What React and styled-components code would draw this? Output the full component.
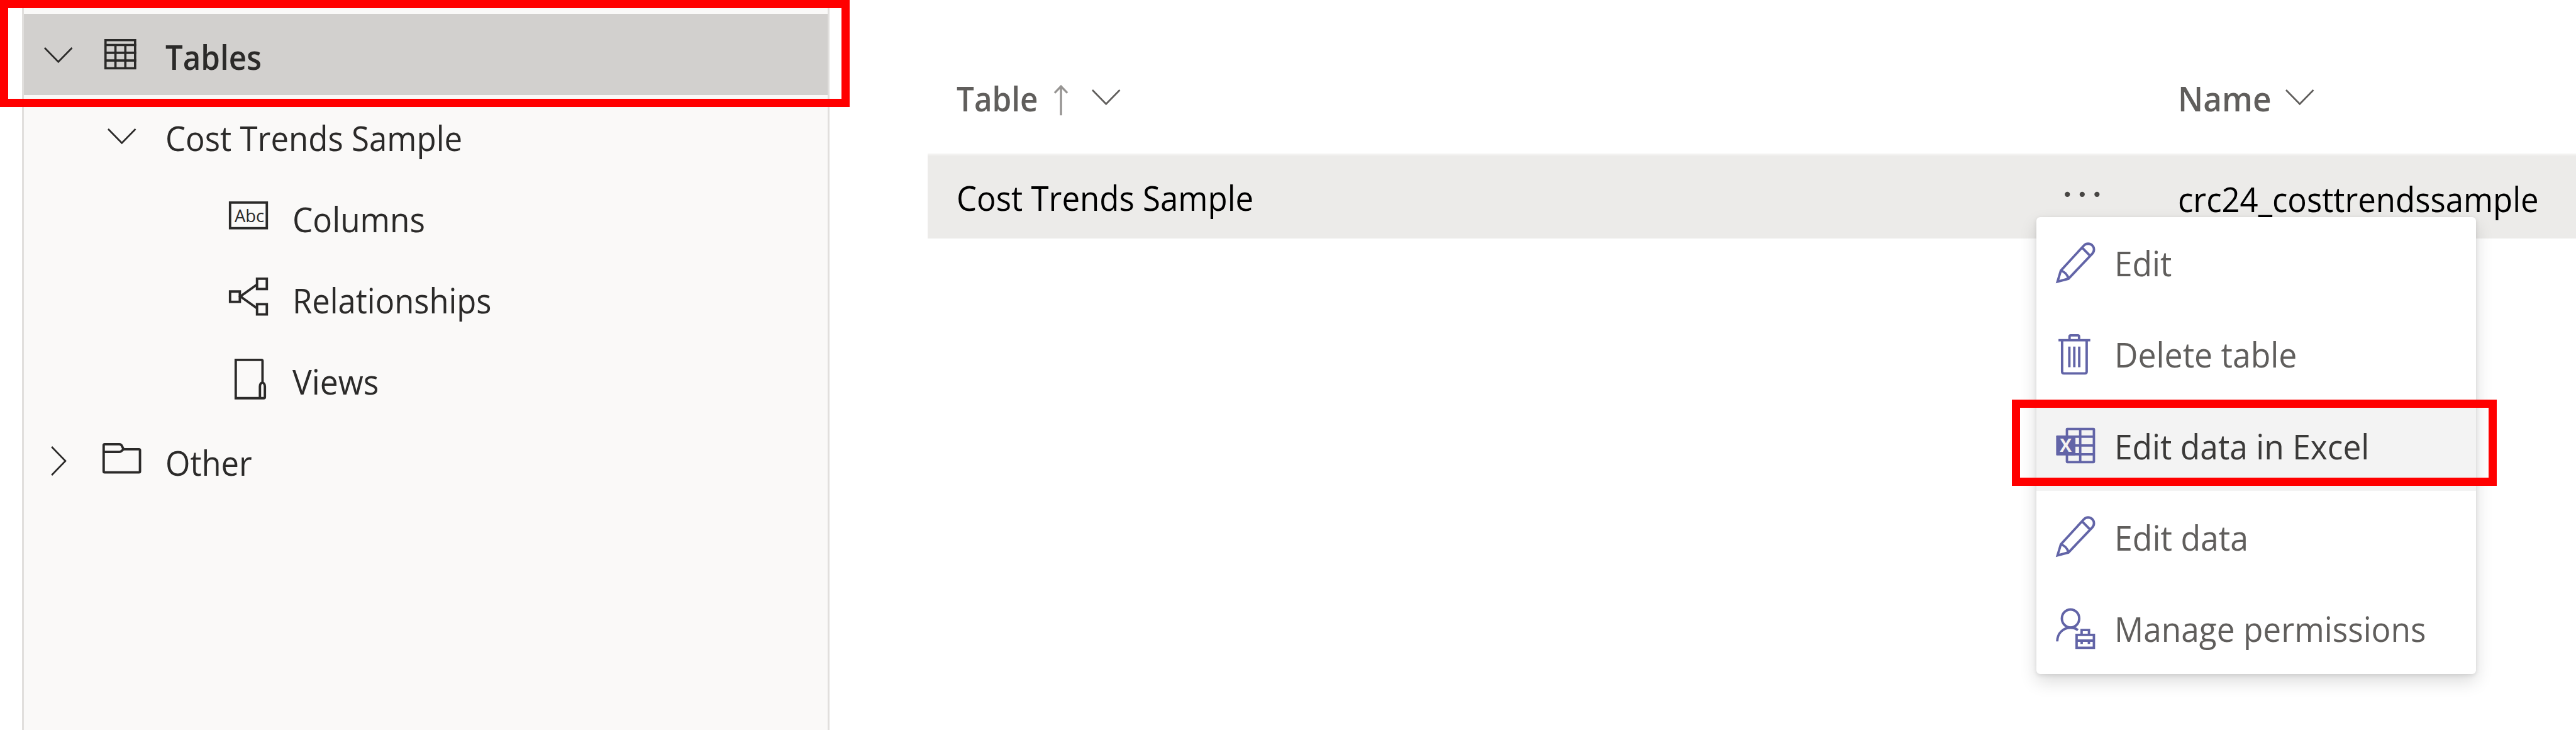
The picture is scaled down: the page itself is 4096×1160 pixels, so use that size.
import React from 'react';
import styled, { createGlobalStyle } from 'styled-components';

const GlobalStyle = createGlobalStyle`
  *, *::before, *::after { box-sizing: border-box; }
  body {
    margin: 0;
    background: #fff;
    font-family: "Open Sans", "Noto Sans", sans-serif;
    overflow: hidden;
  }
`;

const ink = '#2b2a29';
const muted = '#605e5c';
const accent = '#6264a7';

/* Icons are drawn on a slightly larger grid than they are shown at. */
const ICON_SCALE = 0.9597;

const Page = styled.div`
  position: relative;
  display: flex;
  width: 4096px;
  height: 1160px;
  background: #fff;
  overflow: hidden;
`;

const Text = styled.span`
  display: inline-block;
  font-size: 55px;
  line-height: 75px;
  font-weight: ${(p) => (p.$strong ? 600 : 400)};
  white-space: nowrap;
  transform: scaleX(${(p) => p.$fit || 0.93});
  transform-origin: left center;
`;

/* ---------- icons ---------- */

const Svg = styled.svg`
  display: block;
  flex: none;
  overflow: visible;
  fill: none;
  stroke: currentColor;
  stroke-width: ${(p) => p.$line || 4};
  margin-top: ${(p) => (p.$shift || 0) * 2}px;
`;

function Icon({ w, h, line, shift, children }) {
  return (
    <Svg
      width={w * ICON_SCALE}
      height={h * ICON_SCALE}
      viewBox={`0 0 ${w} ${h}`}
      $line={line}
      $shift={shift}
    >
      {children}
    </Svg>
  );
}

const ChevronDown = ({ shift }) => (
  <Icon w={47.4} h={26} line={2.8} shift={shift}>
    <path d="M1 1L23.7 24.2L46.4 1" />
  </Icon>
);

const ChevronRight = () => (
  <Icon w={25} h={49} line={2.8} shift={0.8}>
    <path d="M1.2 1L24 24.5L1.2 48" />
  </Icon>
);

const ArrowUp = ({ shift }) => (
  <Icon w={23} h={50.3} line={3.6} shift={shift}>
    <path d="M11.5 50.3V2M1 13.2L11.5 2.4L22 13.2" />
  </Icon>
);

const TableIcon = () => (
  <Icon w={57.3} h={50.3} line={3.8}>
    <path d="M1.8 1.8H50.9V48.5H1.8Z" />
    <path d="M0 9.9H52.7M0 22.8H52.7M0 35.5H52.7M18.3 9.9V50M34.7 9.9V50" />
  </Icon>
);

const TextBoxIcon = () => (
  <Icon w={64.7} h={46.3} line={4} shift={-1.9}>
    <path d="M1.9 1.9H62.8V44.4H1.9Z" />
    <text x="9.3" y="34" fontSize="28.5" fill="currentColor" stroke="none">
      Abc
    </text>
  </Icon>
);

const RelationshipIcon = () => (
  <Icon w={64.7} h={63} line={4} shift={-1.8}>
    <path d="M1.9 23.2H18.1V40.2H1.9ZM46.6 1.9H62.8V19H46.6ZM46.6 44.1H62.8V61.1H46.6Z" />
    <path d="M46 12L19 31.2L46 50.6" />
  </Icon>
);

const ViewIcon = () => (
  <Icon w={47.4} h={67.3} line={4}>
    <path d="M46.3 39.5V3.7q0-1.8-1.8-1.8H1.9V65.4H48.3q1.9 0 1.9-1.9V46C50.2 42 48 39.5 46.1 39.5C44 39.5 42 42 42 46V65.4" />
  </Icon>
);

const FolderIcon = () => (
  <Icon w={64} h={50.5} line={4} shift={-3}>
    <path d="M3.6 1.9H28Q30.6 1.9 32 4.6L34.8 10.3H60.4q1.7 0 1.7 1.7V46.9q0 1.7-1.7 1.7H3.6q-1.7 0-1.7-1.7V3.6q0-1.7 1.7-1.7Z" />
    <path d="M1.9 14.7H28Q30 14.7 31.3 13.3L34.8 10.3" />
  </Icon>
);

const MoreIcon = () => (
  <Icon w={58} h={10} shift={-4.6}>
    <g fill="currentColor" stroke="none">
      <circle cx="4.4" cy="5" r="4.3" />
      <circle cx="29" cy="5" r="4.3" />
      <circle cx="53.5" cy="5" r="4.3" />
    </g>
  </Icon>
);

const PencilIcon = () => (
  <Icon w={66} h={68}>
    <path d="M2.7 65.2L8.2 46.9L46.5 5.2A9.6 9.6 0 0 1 60.3 18.8L20.8 60.4Z" />
    <path d="M43.3 8.8L56.6 22.3M8.2 46.9Q18.4 50 20.8 60.4" />
  </Icon>
);

const TrashIcon = () => (
  <Icon w={66} h={68}>
    <path d="M4.3 11H57M22.6 11V5q0-2 2-2H36.4q2 0 2 2V11" />
    <path d="M10.3 11V63q0 3 3 3H48q3 0 3-3V11M22.3 21.7V55.7M30.5 21.7V55.7M38.7 21.7V55.7" />
  </Icon>
);

const ExcelIcon = () => (
  <Icon w={66} h={68}>
    <rect x="18.3" y="6.9" width="44.7" height="55" rx="0.6" />
    <path d="M18 19.7H63M18 34.3H63M18 48.9H63M40.3 7V62" />
    <rect x="0.4" y="17.6" width="32" height="33.3" rx="1.4" fill="currentColor" stroke="none" />
    <text x="16.4" y="44.9" textAnchor="middle" fontSize="29.4" fontWeight="700" fill="#f3f2f1" stroke="none">
      X
    </text>
  </Icon>
);

const PermissionsIcon = () => (
  <Icon w={66} h={68}>
    <ellipse cx="24.3" cy="17.5" rx="14.4" ry="14.9" />
    <path d="M2.3 55.4C2.3 42 12 32.8 24.3 32.8C29 32.8 33 34 36.6 36.8" />
    <path d="M34.3 44.7H63V66H34.3ZM34.3 54.2H63M42.6 44.7V36.6H54.8V44.7M42.7 54V59.7M54.7 54V59.7" />
  </Icon>
);

/* ---------- tree ---------- */

const Sidebar = styled.nav`
  flex: none;
  width: 1284px;
  margin-left: 35px;
  padding-top: 22px;
  background: #faf9f8;
  border: solid #e1dfdd;
  border-width: 0 3px;
`;

const TreeRow = styled.div`
  display: flex;
  align-items: center;
  height: 129px;
  padding-left: ${(p) => 4.7 + p.$depth * 100.8}px;
  color: ${ink};
  background: ${(p) => (p.$selected ? '#d2d0ce' : 'transparent')};
`;

const Slot = styled.span`
  flex: none;
  display: flex;
  align-items: center;
  justify-content: center;
  width: 100.8px;
  height: 100%;
`;

const TreeLabel = styled(Text)`
  margin: 5px 0 0 19.2px;
`;

function TreeItem({ label, depth = 0, selected, icons, fit }) {
  return (
    <TreeRow $depth={depth} $selected={selected}>
      {icons.map((icon, i) => (
        <Slot key={i}>{icon}</Slot>
      ))}
      <TreeLabel $strong={selected} $fit={fit}>{label}</TreeLabel>
    </TreeRow>
  );
}

/* ---------- table ---------- */

const Main = styled.main`
  flex: 1;
  min-width: 0;
  padding-left: 156px;
`;

const GridRow = styled.div`
  display: grid;
  grid-template-columns: 1762px 179.5px 1fr;
  align-items: center;
  padding-left: 46px;
`;

const HeaderRow = styled(GridRow)`
  height: 244px;
  padding-top: 67px;
  color: ${muted};
`;

const DataRow = styled(GridRow)`
  height: 135px;
  background: #ecebe9;
  border-top: 3px solid #f3f2f1;
  color: #000;
`;

const HeaderCell = styled.div`
  display: flex;
  align-items: center;
  height: 176px;
  grid-column: ${(p) => p.$col};
  align-self: start;
`;

const SortMark = styled.span`
  margin-left: 11px;
  color: #979593;
`;

const MenuMark = styled.span`
  margin-left: ${(p) => p.$gap}px;
`;

const MoreButton = styled.span`
  color: #484644;
`;

const NameText = styled(Text)`
  margin-top: 4px;
`;

/* ---------- context menu ---------- */

const Menu = styled.div`
  position: absolute;
  left: 3237.5px;
  top: 344.5px;
  width: 699.5px;
  border-radius: 6px;
  background: #fff;
  box-shadow: 0 12px 28px rgba(0, 0, 0, 0.14), 0 2px 7px rgba(0, 0, 0, 0.11);
`;

const MenuItem = styled.div`
  display: flex;
  align-items: center;
  gap: 30px;
  height: 145.3px;
  padding-left: 31.3px;
  color: ${accent};
  background: ${(p) => (p.$active ? '#f3f3f3' : 'transparent')};
`;

const MenuLabel = styled(Text)`
  margin-top: 1px;
  color: ${(p) => (p.$active ? '#3b3a39' : muted)};
`;

const Callout = styled.div`
  position: absolute;
  left: ${(p) => p.$x}px;
  top: ${(p) => p.$y}px;
  width: ${(p) => p.$w}px;
  height: ${(p) => p.$h}px;
  border: 13px solid #f00;
`;

const menuItems = [
  { label: 'Edit', icon: <PencilIcon />, fit: 0.935 },
  { label: 'Delete table', icon: <TrashIcon />, fit: 0.94 },
  { label: 'Edit data in Excel', icon: <ExcelIcon />, fit: 0.936, active: true },
  { label: 'Edit data', icon: <PencilIcon />, fit: 0.941 },
  { label: 'Manage permissions', icon: <PermissionsIcon />, fit: 0.934 },
];

export default function App() {
  return (
    <Page>
      <GlobalStyle />
      <Sidebar>
        <TreeItem label="Tables" selected fit={0.895} icons={[<ChevronDown shift={1} />, <TableIcon />]} />
        <TreeItem label="Cost Trends Sample" depth={1} fit={0.927} icons={[<ChevronDown shift={1.2} />]} />
        <TreeItem label="Columns" depth={3} fit={0.933} icons={[<TextBoxIcon />]} />
        <TreeItem label="Relationships" depth={3} fit={0.922} icons={[<RelationshipIcon />]} />
        <TreeItem label="Views" depth={3} fit={0.938} icons={[<ViewIcon />]} />
        <TreeItem label="Other" fit={0.922} icons={[<ChevronRight />, <FolderIcon />]} />
      </Sidebar>

      <Main>
        <HeaderRow>
          <HeaderCell $col={1}>
            <Text $strong $fit={0.898}>Table</Text>
            <SortMark><ArrowUp shift={3.8} /></SortMark>
            <MenuMark $gap={37.4}><ChevronDown shift={-0.7} /></MenuMark>
          </HeaderCell>
          <HeaderCell $col={3}>
            <Text $strong $fit={0.933}>Name</Text>
            <MenuMark $gap={12}><ChevronDown shift={-0.7} /></MenuMark>
          </HeaderCell>
        </HeaderRow>
        <DataRow>
          <Text $fit={0.927}>Cost Trends Sample</Text>
          <MoreButton><MoreIcon /></MoreButton>
          <NameText $fit={0.925}>crc24_costtrendssample</NameText>
        </DataRow>
      </Main>

      <Menu>
        {menuItems.map((item) => (
          <MenuItem key={item.label} $active={item.active}>
            {item.icon}
            <MenuLabel $fit={item.fit} $active={item.active}>{item.label}</MenuLabel>
          </MenuItem>
        ))}
      </Menu>

      <Callout $x={0} $y={0} $w={1351} $h={170} />
      <Callout $x={3199} $y={635} $w={771} $h={137} />
    </Page>
  );
}
